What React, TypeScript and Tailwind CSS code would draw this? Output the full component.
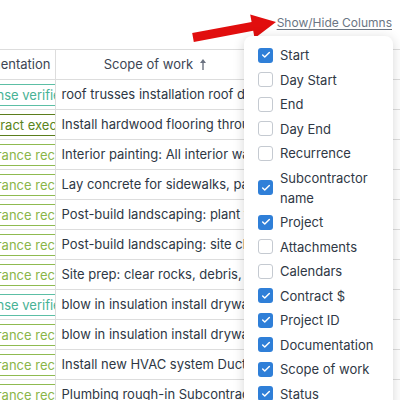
import React from "react";
import { Check } from "lucide-react";

type Status = "license" | "contract" | "insurance";

const rows: { status: Status; scope: string }[] = [
  { status: "license", scope: "roof trusses installation roof decking" },
  { status: "contract", scope: "Install hardwood flooring throughout" },
  { status: "insurance", scope: "Interior painting: All interior walls" },
  { status: "insurance", scope: "Lay concrete for sidewalks, patios" },
  { status: "insurance", scope: "Post-build landscaping: plant trees" },
  { status: "insurance", scope: "Post-build landscaping: site cleanup" },
  { status: "insurance", scope: "Site prep: clear rocks, debris, stumps" },
  { status: "license", scope: "blow in insulation install drywall" },
  { status: "insurance", scope: "blow in insulation install drywall" },
  { status: "insurance", scope: "Install new HVAC system Ductwork" },
  { status: "insurance", scope: "Plumbing rough-in Subcontractor" },
];

const columns: { label: string; checked: boolean }[] = [
  { label: "Start", checked: true },
  { label: "Day Start", checked: false },
  { label: "End", checked: false },
  { label: "Day End", checked: false },
  { label: "Recurrence", checked: false },
  { label: "Subcontractor name", checked: true },
  { label: "Project", checked: true },
  { label: "Attachments", checked: false },
  { label: "Calendars", checked: false },
  { label: "Contract $", checked: true },
  { label: "Project ID", checked: true },
  { label: "Documentation", checked: true },
  { label: "Scope of work", checked: true },
  { label: "Status", checked: true },
];

const StatusBadge = ({ status }: { status: Status }) => {
  if (status === "license") {
    return (
      <span className="inline-block whitespace-nowrap border border-[#5cbfa5] px-1 leading-[20px] text-[#48b295]">
        License verified
      </span>
    );
  }
  if (status === "contract") {
    return (
      <span className="inline-block whitespace-nowrap border border-[#5b7e1c] px-1 leading-[20px] text-[#5a8420]">
        Contract executed
      </span>
    );
  }
  return (
    <span className="inline-block whitespace-nowrap border border-[#8fbb50] px-1 leading-[20px] text-[#8ab548]">
      Insurance received
    </span>
  );
};

function SortUpIcon() {
  return (
    <svg width="6" height="11" viewBox="0 0 6 11" className="text-[#6b7280]">
      <path d="M3 0 L6 4 L0 4 Z" fill="currentColor" />
      <line x1="3" y1="3" x2="3" y2="11" stroke="currentColor" strokeWidth="1.4" />
    </svg>
  );
}

export default function App() {
  return (
    <div className="relative h-[400px] w-[400px] overflow-hidden bg-white font-['Inter',sans-serif] text-[13px]">
      <div className="flex h-[49px] justify-end pr-2 pt-[14px]">
        <button className="h-[18px] text-[12px] leading-[18px] text-[#6b7684] underline underline-offset-2">
          Show/Hide Columns
        </button>
      </div>

      <div className="overflow-hidden">
        <table className="-ml-[49px] w-[504px] table-fixed border-collapse text-left">
          <colgroup>
            <col className="w-[104px]" />
            <col className="w-[200px]" />
            <col className="w-[200px]" />
          </colgroup>
          <thead>
            <tr className="h-[30px] border-y border-[#dddddd] text-[#3c4553]">
              <th className="overflow-hidden whitespace-nowrap border-r border-[#dddddd] pr-[4px] text-right font-normal">
                Documentation
              </th>
              <th className="border-r border-[#dddddd] font-normal">
                <div className="flex items-center justify-center gap-[7px]">
                  <span>Scope of work</span>
                  <SortUpIcon />
                </div>
              </th>
              <th className="font-normal" />
            </tr>
          </thead>
          <tbody>
            {rows.map((row, i) => (
              <tr key={i} className="h-[30px] border-b border-[#dddddd] text-[#2e3744]">
                <td className="overflow-hidden border-r border-[#dddddd] pl-[15px]">
                  <StatusBadge status={row.status} />
                </td>
                <td className="overflow-hidden whitespace-nowrap border-r border-[#dddddd] pl-[6px]">
                  {row.scope}
                </td>
                <td />
              </tr>
            ))}
          </tbody>
        </table>
      </div>

      <svg className="pointer-events-none absolute left-0 top-0" width="400" height="60">
        <polygon
          points="192.2,33.1 193.8,41.9 253.2,30.8 254.6,38.2 276,22 250.2,14.6 251.6,22"
          fill="#e10e0e"
        />
      </svg>

      <div className="absolute left-[244px] top-[36px] w-[149px] rounded-lg bg-white pl-[14px] pr-2 pt-[9px] shadow-[0_2px_12px_rgba(0,0,0,0.16)]">
        <ul className="flex flex-col gap-[4.5px] pb-4">
          {columns.map((c) => (
            <li key={c.label} className="flex items-center gap-[7px] leading-[20px] text-[#2f3845]">
              {c.checked ? (
                <span className="flex h-[15px] w-[15px] shrink-0 items-center justify-center rounded-[3px] bg-[#2f7fd8]">
                  <Check size={10} strokeWidth={3.5} color="white" />
                </span>
              ) : (
                <span className="h-[15px] w-[15px] shrink-0 rounded-[3px] border border-[#c5cad1] bg-white" />
              )}
              <span className="w-[100px]">{c.label}</span>
            </li>
          ))}
        </ul>
      </div>
    </div>
  );
}
